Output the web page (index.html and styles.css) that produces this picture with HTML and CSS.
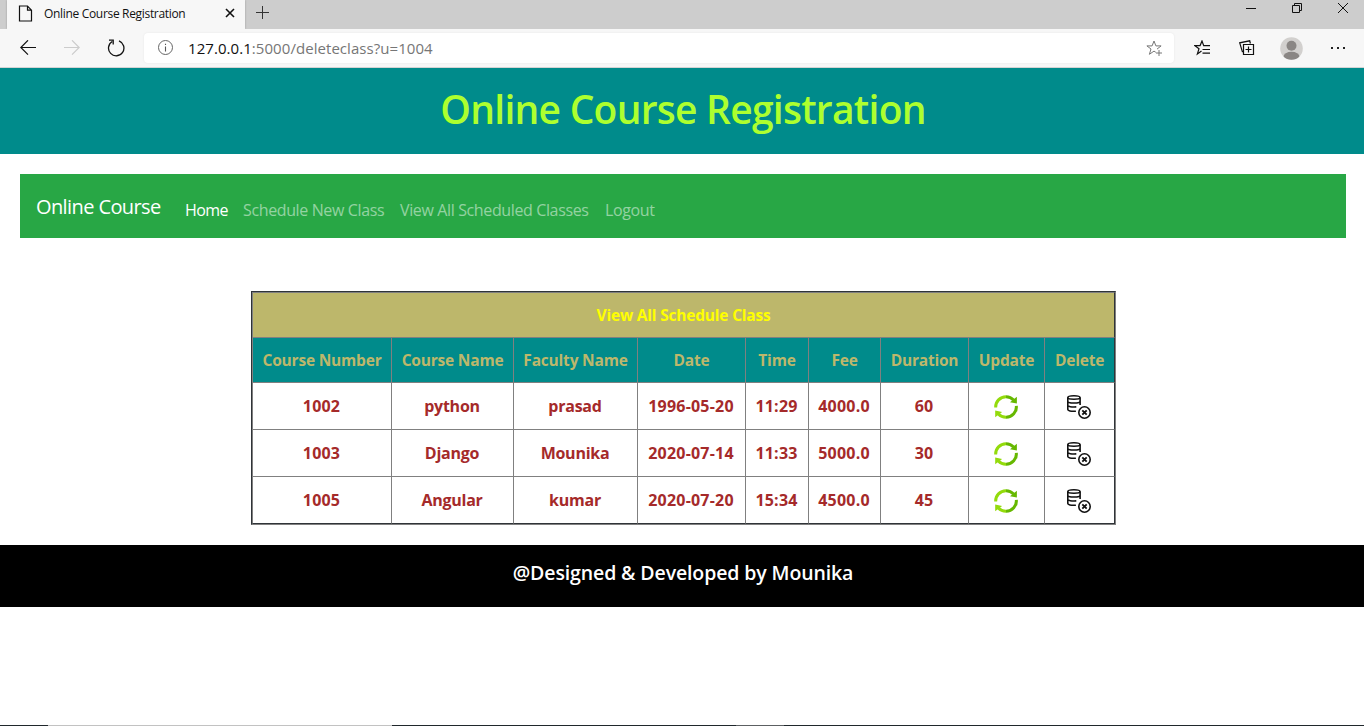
FILE: index.html
```
<!DOCTYPE html>
<html lang="en">
<head>
<meta charset="utf-8">
<title>Online Course Registration</title>
<link rel="stylesheet" href="styles.css">
</head>
<body>
<svg class="defs" width="0" height="0" aria-hidden="true">
  <symbol id="refresh" viewBox="0 0 24 24">
    <path d="M1.7 12.5A10.3 10.3 0 0 1 12 1.7" fill="none" stroke="#93db0c" stroke-width="3"/>
    <path d="M12 1.7A10.3 10.3 0 0 1 19.6 5" fill="none" stroke="#66b800" stroke-width="3"/>
    <path d="M22.9 1.8v6.7l-6.9-1.3z" fill="#66b800"/>
    <path d="M22.3 10.8A10.3 10.3 0 0 1 12 22.3" fill="none" stroke="#66b800" stroke-width="3"/>
    <path d="M12 22.3A10.3 10.3 0 0 1 4.4 19" fill="none" stroke="#93db0c" stroke-width="3"/>
    <path d="M1.2 22.3v-6.7l6.9 1.3z" fill="#93db0c"/>
  </symbol>
  <symbol id="dbdelete" viewBox="0 0 24 24">
    <g fill="none" stroke="#111" stroke-width="1.6">
      <ellipse cx="6.9" cy="2.5" rx="6.1" ry="1.7"/>
      <path d="M.8 2.4v12.2c0 1.2 2.9 1.9 8.1 1.6M.8 6.2c0 1.1 2.8 1.8 6.2 1.8s6.1-.7 6.1-1.8M.8 10.3c0 1.2 3.5 1.9 8.5 1.6M13.1 2.4v7.7"/>
      <circle cx="17.5" cy="17.5" r="5.7"/>
      <path d="M15.3 15.3l4.4 4.4M19.7 15.3l-4.4 4.4" stroke-width="1.8"/>
    </g>
  </symbol>
</svg>

<div class="tabstrip">
  <div class="tab">
    <svg class="page-icon" width="15" height="17" viewBox="0 0 15 17"><path d="M1.5 1h8l4 4.2V16h-12zM9.5 1v4.2h4" fill="none" stroke="#111" stroke-width="1.2"/></svg>
    <span class="tab-title">Online Course Registration</span>
    <svg class="tab-close" width="10" height="10" viewBox="0 0 10 10"><path d="M1 1l8 8M9 1L1 9" stroke="#111" stroke-width="1.6"/></svg>
  </div>
  <svg class="tab-new" width="14" height="14" viewBox="0 0 14 14"><path d="M6.5 0v13M0 6.5h13" stroke="#333"/></svg>
  <div class="window-buttons">
    <svg width="10" height="10" viewBox="0 0 10 10"><path d="M0 5.5h10" stroke="#111"/></svg>
    <svg width="10" height="10" viewBox="0 0 10 10"><path d="M.5 2.5h7v7h-7zM2.5 2.5v-2h7v7h-2" fill="none" stroke="#111"/></svg>
    <svg width="10" height="10" viewBox="0 0 10 10"><path d="M0 0l10 10M10 0L0 10" stroke="#111"/></svg>
  </div>
</div>

<div class="toolbar">
  <svg class="back" width="16" height="16" viewBox="0 0 16 16"><path d="M16 7.5H.8M8 .3L.8 7.5 8 14.7" fill="none" stroke="#111" stroke-width="1.2"/></svg>
  <svg class="forward" width="16" height="16" viewBox="0 0 16 16"><path d="M0 7.5h15.2M8 .3l7.2 7.2L8 14.7" fill="none" stroke="#ccc" stroke-width="1.2"/></svg>
  <svg class="reload" width="18" height="18" viewBox="0 0 18 18"><path d="M12 1.9A7.7 7.7 0 1 1 5.2 2.5M2 1.2h4.2v4.3" fill="none" stroke="#111" stroke-width="1.3"/></svg>
  <div class="address">
    <svg class="info" width="16" height="16" viewBox="0 0 16 16"><circle cx="7.5" cy="7.5" r="7" fill="none" stroke="#666"/><path d="M7.5 6.5v5M7.5 3.8v1.3" stroke="#555" stroke-width="1.1"/></svg>
    <span class="url"><b>127.0.0.1</b>:5000/deleteclass?u=1004</span>
    <svg class="star" width="17" height="17" viewBox="0 0 17 17"><path d="M9.8 12.3L8 11.1 3.4 14.3 5 9 .9 5.9h5.2L8 1l1.9 4.9h5.2L11 9.1M10 13h6M13 10v6" fill="none" stroke="#777"/></svg>
  </div>
  <svg class="favorites" width="17" height="16" viewBox="0 0 17 16"><path d="M7.5 10.9L3.4 13.9 5 8.8.9 5.6h5.2L8 1l1.7 4.6H16M8.5 9.5H16M8.5 13.1H16" fill="none" stroke="#111" stroke-width="1.2"/></svg>
  <svg class="collections" width="16" height="16" viewBox="0 0 16 16"><path d="M4.5 4.5h10v10h-10zM9.5 6.5v6M6.5 9.5h6M3.5 12.2L.7 2.8 10.7.8l.7 2.7" fill="none" stroke="#111" stroke-width="1.2"/></svg>
  <svg class="avatar" width="23" height="23" viewBox="0 0 23 23"><clipPath id="disc"><circle cx="11.5" cy="11.5" r="11.3"/></clipPath><g clip-path="url(#disc)"><path fill="#d2d0ce" d="M0 0h23v23H0z"/><circle cx="11.5" cy="8.8" r="5" fill="#8a8684"/><ellipse cx="11.5" cy="19.7" rx="8" ry="5" fill="#8a8684"/></g></svg>
  <svg class="more" width="16" height="4" viewBox="0 0 16 4"><path d="M1 1h2v2H1zM7 1h2v2H7zM13 1h2v2h-2z" fill="#222"/></svg>
</div>

<header class="banner"><h1>Online Course Registration</h1></header>

<nav class="navbar">
  <a class="brand">Online Course</a>
  <a class="link link-home">Home</a>
  <a class="link link-new">Schedule New Class</a>
  <a class="link link-all">View All Scheduled Classes</a>
  <a class="link link-out">Logout</a>
</nav>

<main class="schedule">
  <table>
    <colgroup><col class="c1"><col class="c2"><col class="c3"><col class="c4"><col class="c5"><col class="c6"><col class="c7"><col class="c8"><col class="c9"></colgroup>
    <tr class="caption"><th colspan="9">View All Schedule Class</th></tr>
    <tr class="heads"><th>Course Number</th><th>Course Name</th><th>Faculty Name</th><th>Date</th><th>Time</th><th>Fee</th><th>Duration</th><th>Update</th><th>Delete</th></tr>
    <tr><td class="num">1002</td><td>python</td><td>prasad</td><td class="num">1996-05-20</td><td class="num">11:29</td><td class="num">4000.0</td><td class="num">60</td><td><svg class="icon"><use href="#refresh"/></svg></td><td><svg class="icon"><use href="#dbdelete"/></svg></td></tr>
    <tr><td class="num">1003</td><td>Django</td><td>Mounika</td><td class="num">2020-07-14</td><td class="num">11:33</td><td class="num">5000.0</td><td class="num">30</td><td><svg class="icon"><use href="#refresh"/></svg></td><td><svg class="icon"><use href="#dbdelete"/></svg></td></tr>
    <tr><td class="num">1005</td><td>Angular</td><td>kumar</td><td class="num">2020-07-20</td><td class="num">15:34</td><td class="num">4500.0</td><td class="num">45</td><td><svg class="icon"><use href="#refresh"/></svg></td><td><svg class="icon"><use href="#dbdelete"/></svg></td></tr>
  </table>
</main>

<footer class="credit">@Designed &amp; Developed by Mounika</footer>
<div class="taskbar"><i class="search"></i><i class="gap"></i><i class="app"></i></div>
</body>
</html>
```
FILE: styles.css
```
* { box-sizing: border-box; }
body {
  margin: 0;
  height: 726px;
  overflow: hidden;
  display: flex;
  flex-direction: column;
  background: #fff;
  font-family: "Open Sans", "Noto Sans", sans-serif;
  font-size: 16px;
}
svg { display: block; flex: none; }
.defs { position: absolute; }

.tabstrip { height: 29px; flex: none; display: flex; background: #cdcdcd; }
.tab { width: 238px; margin-left: 7px; height: 29px; display: flex; align-items: center; background: #f7f7f7; padding: 0 10px 3px 11px; box-shadow: 0 0 2px #999; clip-path: inset(0 -3px 0 -3px); }
.tab-title { margin-left: 11px; flex: 1; font-size: 12px; letter-spacing: -0.32px; color: #111; white-space: nowrap; }
.tab-new { margin: 6px 0 0 11px; }
.window-buttons { margin: 3px 16px 0 auto; display: flex; gap: 36px; }

.toolbar { height: 39px; flex: none; display: flex; align-items: center; background: #f7f7f7; border-bottom: 1px solid #d4d4d4; padding-left: 20px; }
.forward { margin-left: 28px; }
.reload { margin-left: 27px; }
.address { width: 1030px; height: 30px; margin-left: 19px; display: flex; align-items: center; background: #fff; border-radius: 4px; padding: 0 11px 0 14px; box-shadow: 0 0 2px #e4e4e4; }
.url { margin-left: 14px; flex: 1; font-size: 15px; color: #767676; letter-spacing: 0.06px; }
.url b { font-weight: 400; color: #111; }
.favorites { margin-left: 20px; }
.collections { margin-left: 28px; }
.avatar { margin-left: 25px; }
.more { margin-left: 27px; }

.banner { height: 86px; flex: none; background: #008b8b; text-align: center; }
.banner h1 { margin: 0; padding: 17px 0 0 2px; font-size: 39px; line-height: 48px; font-weight: 600; letter-spacing: -0.75px; color: #adff2f; }

.navbar { height: 64px; flex: none; margin: 20px 18px 0 20px; padding: 0 16px; display: flex; align-items: baseline; background: #28a745; }
.brand { width: 149px; line-height: 30px; padding-top: 18px; font-size: 20px; color: #fff; letter-spacing: -0.6px; white-space: nowrap; }
.link { line-height: 24px; color: rgba(255, 255, 255, .5); white-space: nowrap; letter-spacing: -0.37px; position: relative; top: 2px; }
.link-home { width: 58px; color: #fff; letter-spacing: -0.6px; }
.link-new { width: 157px; }
.link-all { width: 205px; }

.schedule { width: 865px; margin: 53px 0 0 251px; flex: none; border: 1px solid; border-color: #2f3438 #808080 #808080 #2f3438; }
table { width: 863px; table-layout: fixed; border-collapse: separate; border-spacing: 0; font-weight: 700; }
.c1 { width: 140px; }
.c2 { width: 122px; }
.c3 { width: 124px; }
.c4 { width: 108px; }
.c5 { width: 63px; }
.c6 { width: 72px; }
.c7 { width: 88px; }
.c8 { width: 76px; }
.c9 { width: 70px; }
th, td { padding: 0; height: 47px; line-height: 24px; text-align: center; vertical-align: middle; white-space: nowrap; border-right: 1px solid #808080; border-bottom: 1px solid #808080; }
td { color: #a52a2a; letter-spacing: -0.25px; padding: 1px 1px 1px 0; }
.num { letter-spacing: 0.2px; }
tr > :first-child { border-left: 1px solid #808080; }
tr > :last-child { border-right-color: #2f3438; }
tr:last-child > * { border-bottom-color: #2f3438; }
.caption th { height: 46px; border-top: 1px solid #808080; background: #bdb76b; color: #ff0; font-size: 15.5px; letter-spacing: -0.2px; }
.heads th { height: 45px; background: #008b8b; color: #bdb76b; font-size: 15.5px; letter-spacing: -0.2px; }
.icon { width: 24px; height: 24px; margin: 0 auto; position: relative; top: 1px; }

.credit { height: 62px; flex: none; margin-top: 20px; padding: 16px 0 0 2px; background: #000; color: #fff; text-align: center; font-size: 19.5px; line-height: 24px; font-weight: 600; letter-spacing: -0.12px; }

.taskbar { height: 1px; margin-top: auto; padding-left: 48px; display: flex; background: #20282c; }
.search { width: 344px; background: #c2c2c2; }
.gap { width: 344px; }
.app { width: 48px; background: #5c6062; }
```
